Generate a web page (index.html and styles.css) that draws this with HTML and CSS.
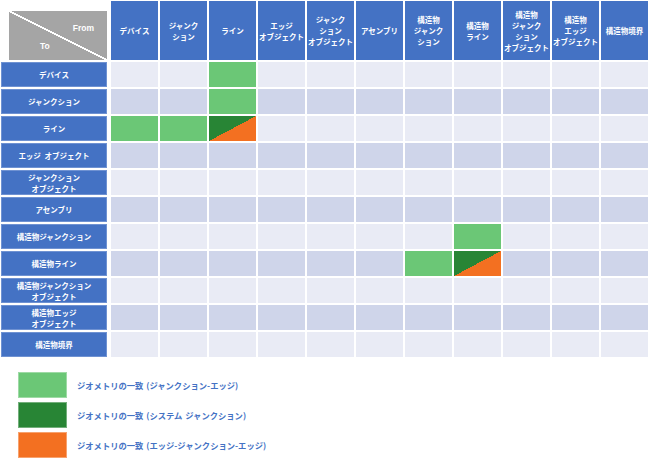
FILE: index.html
```html
<!DOCTYPE html>
<html lang="ja">
<head>
<meta charset="utf-8">
<link rel="stylesheet" href="styles.css">
</head>
<body>
<div class="matrix">
  <div class="row head">
    <div class="corner-cell"><div class="corner"><span class="from">From</span><span class="to">To</span></div></div>
    <div class="ch">デバイス</div>
    <div class="ch">ジャンク<br>ション</div>
    <div class="ch">ライン</div>
    <div class="ch">エッジ<br>オブジェクト</div>
    <div class="ch">ジャンク<br>ション<br>オブジェクト</div>
    <div class="ch">アセンブリ</div>
    <div class="ch">構造物<br>ジャンク<br>ション</div>
    <div class="ch">構造物<br>ライン</div>
    <div class="ch">構造物<br>ジャンク<br>ション<br>オブジェクト</div>
    <div class="ch">構造物<br>エッジ<br>オブジェクト</div>
    <div class="ch">構造物境界</div>
  </div>
  <div class="row light">
    <div class="rh">デバイス</div>
    <div class="c"></div><div class="c"></div><div class="c g"></div><div class="c"></div><div class="c"></div><div class="c"></div><div class="c"></div><div class="c"></div><div class="c"></div><div class="c"></div><div class="c"></div>
  </div>
  <div class="row dark">
    <div class="rh">ジャンクション</div>
    <div class="c"></div><div class="c"></div><div class="c g"></div><div class="c"></div><div class="c"></div><div class="c"></div><div class="c"></div><div class="c"></div><div class="c"></div><div class="c"></div><div class="c"></div>
  </div>
  <div class="row light">
    <div class="rh">ライン</div>
    <div class="c g"></div><div class="c g"></div><div class="c split"></div><div class="c"></div><div class="c"></div><div class="c"></div><div class="c"></div><div class="c"></div><div class="c"></div><div class="c"></div><div class="c"></div>
  </div>
  <div class="row dark">
    <div class="rh">エッジ&#8194;オブジェクト</div>
    <div class="c"></div><div class="c"></div><div class="c"></div><div class="c"></div><div class="c"></div><div class="c"></div><div class="c"></div><div class="c"></div><div class="c"></div><div class="c"></div><div class="c"></div>
  </div>
  <div class="row light">
    <div class="rh">ジャンクション<br>オブジェクト</div>
    <div class="c"></div><div class="c"></div><div class="c"></div><div class="c"></div><div class="c"></div><div class="c"></div><div class="c"></div><div class="c"></div><div class="c"></div><div class="c"></div><div class="c"></div>
  </div>
  <div class="row dark">
    <div class="rh">アセンブリ</div>
    <div class="c"></div><div class="c"></div><div class="c"></div><div class="c"></div><div class="c"></div><div class="c"></div><div class="c"></div><div class="c"></div><div class="c"></div><div class="c"></div><div class="c"></div>
  </div>
  <div class="row light">
    <div class="rh">構造物ジャンクション</div>
    <div class="c"></div><div class="c"></div><div class="c"></div><div class="c"></div><div class="c"></div><div class="c"></div><div class="c"></div><div class="c g"></div><div class="c"></div><div class="c"></div><div class="c"></div>
  </div>
  <div class="row dark">
    <div class="rh">構造物ライン</div>
    <div class="c"></div><div class="c"></div><div class="c"></div><div class="c"></div><div class="c"></div><div class="c"></div><div class="c g"></div><div class="c split"></div><div class="c"></div><div class="c"></div><div class="c"></div>
  </div>
  <div class="row light">
    <div class="rh">構造物ジャンクション<br>オブジェクト</div>
    <div class="c"></div><div class="c"></div><div class="c"></div><div class="c"></div><div class="c"></div><div class="c"></div><div class="c"></div><div class="c"></div><div class="c"></div><div class="c"></div><div class="c"></div>
  </div>
  <div class="row dark">
    <div class="rh">構造物エッジ<br>オブジェクト</div>
    <div class="c"></div><div class="c"></div><div class="c"></div><div class="c"></div><div class="c"></div><div class="c"></div><div class="c"></div><div class="c"></div><div class="c"></div><div class="c"></div><div class="c"></div>
  </div>
  <div class="row light">
    <div class="rh">構造物境界</div>
    <div class="c"></div><div class="c"></div><div class="c"></div><div class="c"></div><div class="c"></div><div class="c"></div><div class="c"></div><div class="c"></div><div class="c"></div><div class="c"></div><div class="c"></div>
  </div>
</div>
<div class="legend">
  <div class="item"><div class="sw sw-g"></div><span>ジオメトリの一致 (ジャンクション-エッジ)</span></div>
  <div class="item"><div class="sw sw-dg"></div><span>ジオメトリの一致 (システム ジャンクション)</span></div>
  <div class="item"><div class="sw sw-o"></div><span>ジオメトリの一致 (エッジ-ジャンクション-エッジ)</span></div>
</div>
</body>
</html>
```
FILE: styles.css
```css
html, body {
  margin: 0;
  background: #ffffff;
}
body {
  padding: 1px;
  font-family: "Noto Sans CJK JP", "Noto Sans", sans-serif;
  font-weight: 700;
  font-size: 7.5px;
  color: #ffffff;
}
.matrix {
  display: flex;
  flex-direction: column;
  gap: 2px;
}
.row {
  display: flex;
  gap: 2px;
  height: 25px;
}
.row.head {
  height: 59px;
}
.corner-cell {
  width: 106px;
  margin-right: 2px;
  padding: 10px 0 0 8px;
  box-sizing: border-box;
  display: flex;
}
.corner {
  flex: 1;
  background: linear-gradient(to top right, #a5a5a5 calc(50% - 1px), #ffffff calc(50% - 1px), #ffffff calc(50% + 1px), #a5a5a5 calc(50% + 1px));
  display: flex;
  flex-direction: column;
  justify-content: space-between;
  padding: 12px 13px 9px 31px;
  font-family: "Liberation Sans", "Noto Sans", sans-serif;
  font-size: 8.5px;
  line-height: 10px;
}
.from { align-self: flex-end; }
.to { align-self: flex-start; }
.ch {
  width: 47px;
  background: #4472c4;
  display: flex;
  align-items: center;
  justify-content: center;
  text-align: center;
  line-height: 11px;
  white-space: nowrap;
}
.rh {
  width: 106px;
  margin-right: 2px;
  box-sizing: border-box;
  background: #4472c4;
  border: 1px solid #6f92d2;
  display: flex;
  align-items: center;
  justify-content: center;
  text-align: center;
  line-height: 11px;
  white-space: nowrap;
}
.c { width: 47px; }
.light .c { background: #e9ebf5; }
.dark .c { background: #cfd5ea; }
.row .c.g { background: #6bc776; }
.row .c.split { background: linear-gradient(to bottom right, #288535 50%, #f37021 50%); }
.legend {
  margin: 15px 0 0 17px;
  display: flex;
  flex-direction: column;
  gap: 4px;
}
.item {
  display: flex;
  align-items: center;
  gap: 10px;
  color: #4472c4;
  font-size: 8.3px;
  word-spacing: 1px;
}
.sw {
  width: 49px;
  height: 26px;
  box-sizing: border-box;
  border: 1px solid rgba(255,255,255,0.35);
}
.sw-g { background: #6bc776; }
.sw-dg { background: #288535; }
.sw-o { background: #f37021; }
```
